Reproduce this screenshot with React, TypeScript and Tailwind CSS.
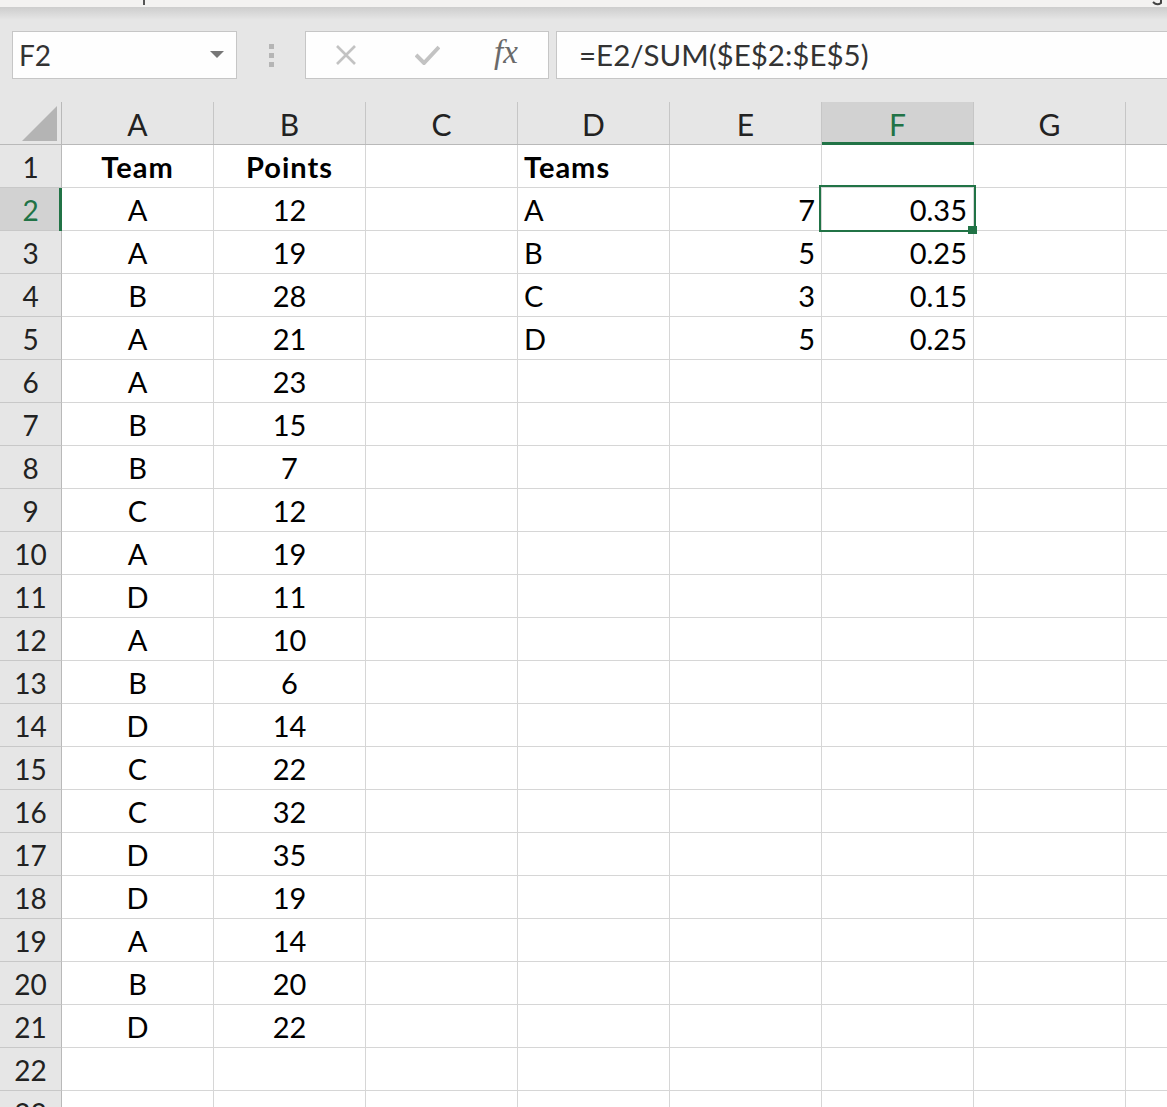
import React from "react";

const columns = ["A", "B", "C", "D", "E", "F", "G", "H"];

const teamCol = ["A", "A", "B", "A", "A", "B", "B", "C", "A", "D", "A", "B", "D", "C", "C", "D", "D", "A", "B", "D"];
const pointsCol = [12, 19, 28, 21, 23, 15, 7, 12, 19, 11, 10, 6, 14, 22, 32, 35, 19, 14, 20, 22];
const teams = ["A", "B", "C", "D"];
const counts = [7, 5, 3, 5];
const shares = ["0.35", "0.25", "0.15", "0.25"];

type Cell = { text: string; align?: "left" | "center" | "right"; bold?: boolean };

function cellFor(row: number, col: string): Cell | null {
  if (row === 1) {
    if (col === "A") return { text: "Team", align: "center", bold: true };
    if (col === "B") return { text: "Points", align: "center", bold: true };
    if (col === "D") return { text: "Teams", align: "left", bold: true };
    return null;
  }
  const i = row - 2;
  if (col === "A" && teamCol[i]) return { text: teamCol[i], align: "center" };
  if (col === "B" && pointsCol[i] !== undefined) return { text: String(pointsCol[i]), align: "center" };
  if (i < 4) {
    if (col === "D") return { text: teams[i], align: "left" };
    if (col === "E") return { text: String(counts[i]), align: "right" };
    if (col === "F") return { text: shares[i], align: "right" };
  }
  return null;
}

const Toolbar = () => (
  <div className="h-[102px] shrink-0">
    <div className="relative h-[7px] bg-[#f3f2f1]">
      <div className="absolute left-[143px] top-0 h-[5px] w-[2px] bg-[#555]" />
      <svg className="absolute left-[1152px] top-0" width="12" height="6" viewBox="0 0 12 6">
        <path d="M1 2 Q5 6 9 3 L9 0" fill="none" stroke="#444" strokeWidth="2" />
      </svg>
    </div>
    <div className="h-[13px] bg-gradient-to-b from-[#cdcdcd] to-[#e6e6e6]" />
    <div className="flex items-start pt-[11px]">
      <div className="ml-[12px] flex h-[48px] w-[225px] items-center justify-between border border-[#c6c6c6] bg-[#fefefe] pl-[6px] pr-[12px]">
        <span className="text-[28px] text-[#333]">F2</span>
        <svg width="14" height="8" viewBox="0 0 14 8">
          <path d="M0 0 L14 0 L7 7 Z" fill="#777" />
        </svg>
      </div>
      <div className="ml-[32px] mt-[13px] flex flex-col gap-[4px]">
        <div className="h-[5px] w-[5px] bg-[#b5b5b5]" />
        <div className="h-[5px] w-[5px] bg-[#b5b5b5]" />
        <div className="h-[5px] w-[5px] bg-[#b5b5b5]" />
      </div>
      <div className="ml-[31px] flex h-[48px] w-[244px] items-center border border-[#c6c6c6] bg-[#fefefe]">
        <svg className="ml-[29px]" width="22" height="20" viewBox="0 0 22 20">
          <path d="M2 1 L20 19 M20 1 L2 19" stroke="#c3c3c3" strokeWidth="2.6" />
        </svg>
        <svg className="ml-[58px]" width="25" height="20" viewBox="0 0 25 20">
          <path d="M1 10 L9 18 L24 2" fill="none" stroke="#c3c3c3" strokeWidth="4" />
        </svg>
        <span className="ml-[54px] -mt-[4px] font-['Liberation_Serif',serif] text-[33px] italic text-[#6a6a6a]">fx</span>
      </div>
      <div className="ml-[7px] flex h-[48px] flex-1 items-center border-y border-l border-[#c6c6c6] bg-[#fefefe] pl-[22px]">
        <span className="text-[29.5px] text-[#333]">=E2/SUM($E$2:$E$5)</span>
      </div>
    </div>
  </div>
);

const HeaderRow = () => (
  <div className="flex h-[43px] shrink-0 border-b border-[#b9b9b9]">
    <div className="flex w-[62px] shrink-0 items-end justify-end border-r border-[#b9b9b9] pb-[3px] pr-[4px]">
      <svg width="35" height="35" viewBox="0 0 35 35">
        <path d="M35 0 L35 35 L0 35 Z" fill="#b4b4b4" />
      </svg>
    </div>
    {columns.map((c) =>
      c === "F" ? (
        <div
          key={c}
          className="relative flex w-[152px] shrink-0 items-center justify-center border-r border-[#c6c6c6] bg-[#d2d2d2] pt-[2px] text-[30px] text-[#217346]"
        >
          {c}
          <div className="absolute -bottom-[2px] left-0 h-[4px] w-[152px] bg-[#217346]" />
        </div>
      ) : (
        <div
          key={c}
          className="flex w-[152px] shrink-0 items-center justify-center border-r border-[#c6c6c6] pt-[2px] text-[30px] text-[#222]"
        >
          {c}
        </div>
      )
    )}
  </div>
);

const Row = ({ n }: { n: number }) => (
  <div className="flex h-[43px] shrink-0">
    <div
      className={
        n === 2
          ? "relative flex w-[62px] shrink-0 items-center justify-center border-r border-b border-r-[#b9b9b9] border-b-[#c8c8c8] bg-[#d2d2d2] pt-[2px] text-[28px] text-[#217346]"
          : "flex w-[62px] shrink-0 items-center justify-center border-r border-b border-r-[#b9b9b9] border-b-[#c8c8c8] pt-[2px] text-[28px] text-[#222]"
      }
    >
      {n}
      {n === 2 && <div className="absolute -right-[1px] top-0 h-[43px] w-[3px] bg-[#217346]" />}
    </div>
    {columns.map((c) => {
      const cell = cellFor(n, c);
      const selected = n === 2 && c === "F";
      return (
        <div
          key={c}
          className={
            "relative flex w-[152px] shrink-0 items-center border-r border-b border-[#d6d6d6] bg-white px-[6px] pt-[2px] text-[29px] text-black " +
            (cell?.align === "center" ? "justify-center" : cell?.align === "right" ? "justify-end" : "justify-start")
          }
        >
          {cell && <span className={cell.bold ? "font-bold tracking-[1px]" : ""}>{cell.text}</span>}
          {selected && (
            <>
              <div className="absolute -left-[3px] -top-[3px] z-10 h-[47px] w-[157px] border-2 border-[#217346]" />
              <div className="absolute left-[146px] top-[38px] z-10 h-[8px] w-[9px] bg-[#217346]" />
            </>
          )}
        </div>
      );
    })}
  </div>
);

export default function App() {
  return (
    <div className="flex h-[1107px] w-[1167px] flex-col overflow-hidden bg-[#e6e6e6] font-['Lato',sans-serif]">
      <Toolbar />
      <HeaderRow />
      <div className="flex flex-col">
        {Array.from({ length: 23 }, (_, i) => (
          <Row key={i} n={i + 1} />
        ))}
      </div>
    </div>
  );
}
